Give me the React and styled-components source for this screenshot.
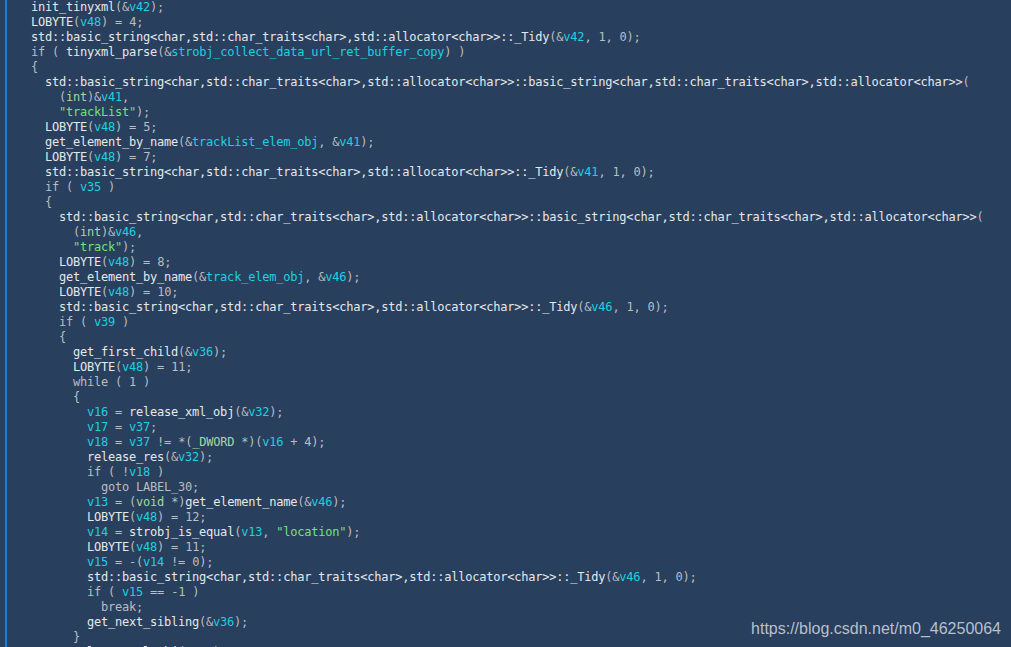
import React from "react";
import styled, { createGlobalStyle } from "styled-components";

const GlobalStyle = createGlobalStyle`
  html, body {
    margin: 0;
    padding: 0;
    background: #283f5d;
    overflow: hidden;
  }
`;

const COLORS = {
  name: "#e6e8ea",
  punct: "#babdc1",
  var: "#1fd0e0",
  str: "#74e27a",
  type: "#a6d79c",
};

const TIDY = "std::basic_string<char,std::char_traits<char>,std::allocator<char>>::_Tidy";
const CTOR =
  "std::basic_string<char,std::char_traits<char>,std::allocator<char>>::basic_string<char,std::char_traits<char>,std::allocator<char>>";

const lines = [
  [0, "init_tinyxml(&v42);"],
  [0, "LOBYTE(v48) = 4;"],
  [0, `${TIDY}(&v42, 1, 0);`],
  [0, "if ( tinyxml_parse(&strobj_collect_data_url_ret_buffer_copy) )"],
  [0, "{"],
  [1, `${CTOR}(`],
  [2, "(int)&v41,"],
  [2, '"trackList");'],
  [1, "LOBYTE(v48) = 5;"],
  [1, "get_element_by_name(&trackList_elem_obj, &v41);"],
  [1, "LOBYTE(v48) = 7;"],
  [1, `${TIDY}(&v41, 1, 0);`],
  [1, "if ( v35 )"],
  [1, "{"],
  [2, `${CTOR}(`],
  [3, "(int)&v46,"],
  [3, '"track");'],
  [2, "LOBYTE(v48) = 8;"],
  [2, "get_element_by_name(&track_elem_obj, &v46);"],
  [2, "LOBYTE(v48) = 10;"],
  [2, `${TIDY}(&v46, 1, 0);`],
  [2, "if ( v39 )"],
  [2, "{"],
  [3, "get_first_child(&v36);"],
  [3, "LOBYTE(v48) = 11;"],
  [3, "while ( 1 )"],
  [3, "{"],
  [4, "v16 = release_xml_obj(&v32);"],
  [4, "v17 = v37;"],
  [4, "v18 = v37 != *(_DWORD *)(v16 + 4);"],
  [4, "release_res(&v32);"],
  [4, "if ( !v18 )"],
  [5, "goto LABEL_30;"],
  [4, "v13 = (void *)get_element_name(&v46);"],
  [4, "LOBYTE(v48) = 12;"],
  [4, 'v14 = strobj_is_equal(v13, "location");'],
  [4, "LOBYTE(v48) = 11;"],
  [4, "v15 = -(v14 != 0);"],
  [4, `${TIDY}(&v46, 1, 0);`],
  [4, "if ( v15 == -1 )"],
  [5, "break;"],
  [4, "get_next_sibling(&v36);"],
  [3, "}"],
  [3, "release_xml_obj(&v36);"],
];

const KEYWORDS = new Set(["if", "while", "goto", "break", "LABEL_30"]);
const TYPES = new Set(["int", "void", "_DWORD"]);
const GLOBALS = new Set(["strobj_collect_data_url_ret_buffer_copy", "trackList_elem_obj", "track_elem_obj"]);

// crude tokenizer, good enough for hex-rays output
function tokenize(text) {
  const re = /(std::[^(]+)|("[^"]*")|([A-Za-z_][A-Za-z0-9_]*)|(\s+)|([^A-Za-z_\s"]+)/g;
  const out = [];
  let m;
  while ((m = re.exec(text))) {
    if (m[1]) out.push(["name", m[1]]);
    else if (m[2]) out.push(["str", m[2]]);
    else if (m[3]) {
      const w = m[3];
      if (/^v\d+$/.test(w) || GLOBALS.has(w)) out.push(["var", w]);
      else if (TYPES.has(w)) out.push(["type", w]);
      else if (KEYWORDS.has(w)) out.push(["punct", w]);
      else out.push(["name", w]);
    } else if (m[4]) out.push(["punct", m[4]]);
    else out.push(["punct", m[5]]);
  }
  return out;
}

const Editor = styled.div`
  position: relative;
  width: 1011px;
  height: 647px;
  overflow: hidden;
  display: flex;
  background: #283f5d;
`;

const Gutter = styled.div`
  width: 5px;
  flex-shrink: 0;
`;

const Pane = styled.div`
  flex: 1;
  border-left: 2px solid #1f7bd6;
  padding-left: 24px;
  font-family: "DejaVu Sans Mono", "Liberation Mono", monospace;
  font-size: 12px;
  letter-spacing: -0.22px;
  line-height: 15px;
`;

const Line = styled.div`
  white-space: pre;
  height: 15px;
  padding-left: ${(p) => p.$indent * 14}px;
`;

const Tok = styled.span`
  color: ${(p) => COLORS[p.$kind]};
`;

const Watermark = styled.div`
  position: absolute;
  right: 10px;
  bottom: 9px;
  font-family: "Liberation Sans", Arial, sans-serif;
  font-size: 16px;
  color: rgba(214, 218, 226, 0.85);
`;

export default function App() {
  return (
    <>
      <GlobalStyle />
      <Editor>
        <Gutter />
        <Pane>
          {lines.map(([indent, text], i) => (
            <Line key={i} $indent={indent}>
              {tokenize(text).map(([kind, t], j) => (
                <Tok key={j} $kind={kind}>
                  {t}
                </Tok>
              ))}
            </Line>
          ))}
        </Pane>
        <Watermark>https://blog.csdn.net/m0_46250064</Watermark>
      </Editor>
    </>
  );
}
